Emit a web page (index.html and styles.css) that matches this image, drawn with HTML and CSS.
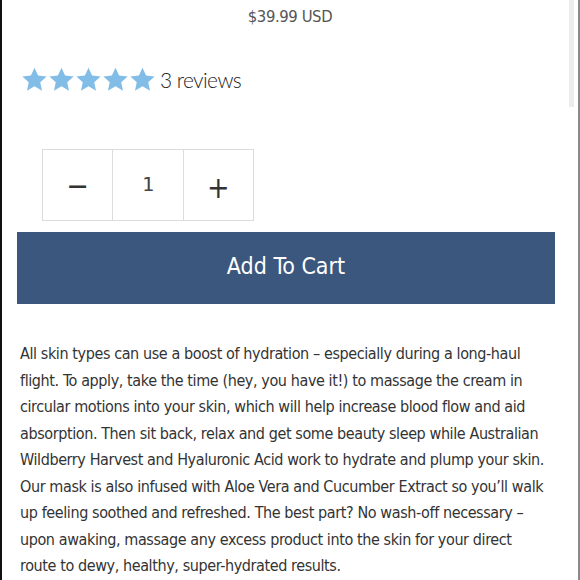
FILE: index.html
```html
<!DOCTYPE html>
<html>
<head>
<meta charset="utf-8">
<link rel="stylesheet" href="styles.css">
</head>
<body>
<div class="page">
  <div class="thumb"></div>
  <div class="price">$39.99 USD</div>
  <div class="rating">
    <div class="stars">
      <svg viewBox="0 0 24 24" class="star"><path d="M12 1.5l3.2 7 7.6.8-5.7 5.1 1.6 7.5L12 18l-6.7 3.9 1.6-7.5L1.2 9.3l7.6-.8z"/></svg>
      <svg viewBox="0 0 24 24" class="star"><path d="M12 1.5l3.2 7 7.6.8-5.7 5.1 1.6 7.5L12 18l-6.7 3.9 1.6-7.5L1.2 9.3l7.6-.8z"/></svg>
      <svg viewBox="0 0 24 24" class="star"><path d="M12 1.5l3.2 7 7.6.8-5.7 5.1 1.6 7.5L12 18l-6.7 3.9 1.6-7.5L1.2 9.3l7.6-.8z"/></svg>
      <svg viewBox="0 0 24 24" class="star"><path d="M12 1.5l3.2 7 7.6.8-5.7 5.1 1.6 7.5L12 18l-6.7 3.9 1.6-7.5L1.2 9.3l7.6-.8z"/></svg>
      <svg viewBox="0 0 24 24" class="star"><path d="M12 1.5l3.2 7 7.6.8-5.7 5.1 1.6 7.5L12 18l-6.7 3.9 1.6-7.5L1.2 9.3l7.6-.8z"/></svg>
    </div>
    <span class="count">3 reviews</span>
  </div>
  <div class="qty">
    <div class="cell minus">−</div>
    <div class="cell num">1</div>
    <div class="cell plus">+</div>
  </div>
  <button class="cart">Add To Cart</button>
  <p class="desc">All skin types can use a boost of hydration – especially during a long-haul<br>
flight. To apply, take the time (hey, you have it!) to massage the cream in<br>
circular motions into your skin, which will help increase blood flow and aid<br>
absorption. Then sit back, relax and get some beauty sleep while Australian<br>
Wildberry Harvest and Hyaluronic Acid work to hydrate and plump your skin.<br>
Our mask is also infused with Aloe Vera and Cucumber Extract so you’ll walk<br>
up feeling soothed and refreshed. The best part? No wash-off necessary –<br>
upon awaking, massage any excess product into the skin for your direct<br>
route to dewy, healthy, super-hydrated results.</p>
</div>
</body>
</html>
```
FILE: styles.css
```css
html, body {
  margin: 0;
  padding: 0;
  background: #fff;
}
.page {
  position: relative;
  box-sizing: border-box;
  width: 580px;
  height: 580px;
  overflow: hidden;
  border-left: 2px solid #111;
  border-right: 2px solid #8a8a8a;
  font-family: "DejaVu Sans Condensed", "DejaVu Sans", sans-serif;
  font-stretch: condensed;
  color: #333;
}
.thumb {
  position: absolute;
  top: 0;
  right: 4px;
  width: 5px;
  height: 107px;
  background: #ececec;
}
.price {
  text-align: center;
  padding-top: 6px;
  font-size: 16.5px;
  line-height: 22px;
  letter-spacing: -0.4px;
  color: #555;
}
.rating {
  display: flex;
  align-items: center;
  margin-top: 38px;
  padding-left: 19px;
}
.stars {
  display: flex;
}
.star {
  width: 27px;
  height: 27px;
  fill: #82bde8;
}
.count {
  margin-left: 4px;
  font-family: "Lato", sans-serif;
  font-stretch: normal;
  font-weight: 300;
  font-size: 21px;
  letter-spacing: -0.6px;
  color: #1e1e1e;
}
.qty {
  display: flex;
  margin: 56px 0 0 40px;
  width: 212px;
  height: 72px;
  box-sizing: border-box;
  border: 1px solid #dcdcdc;
}
.cell {
  flex: 1;
  display: flex;
  align-items: center;
  justify-content: center;
  font-size: 30px;
  color: #333;
}
.cell + .cell {
  border-left: 1px solid #dcdcdc;
}
.num {
  font-size: 20px;
  padding-bottom: 2px;
  color: #444;
  font-family: "DejaVu Sans Mono", monospace;
}
.plus {
  padding-top: 4px;
}
.cart {
  display: block;
  margin: 11px 0 0 15px;
  width: 538px;
  height: 72px;
  border: none;
  background: #3b577d;
  color: #fff;
  font-family: inherit;
  font-stretch: condensed;
  font-size: 23px;
  padding: 0 0 4px 0;
}
.desc {
  margin: 37px 0 0 18px;
  width: 545px;
  font-size: 16px;
  letter-spacing: -0.4px;
  line-height: 26.5px;
  color: #333;
}
```
